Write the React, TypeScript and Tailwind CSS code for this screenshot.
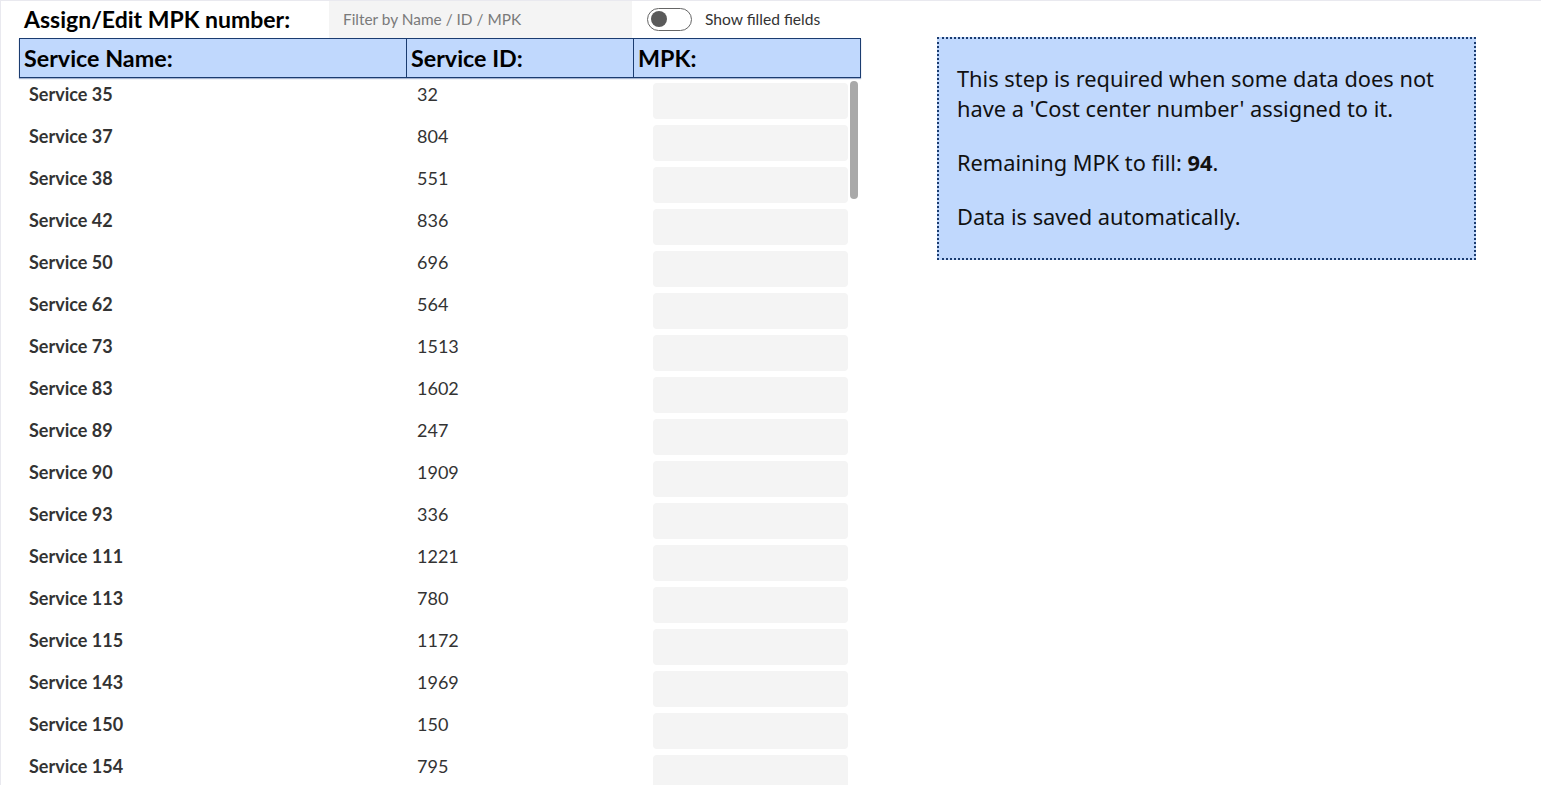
import React from 'react';

const rows: [string, string][] = [
  ['Service 35', '32'],
  ['Service 37', '804'],
  ['Service 38', '551'],
  ['Service 42', '836'],
  ['Service 50', '696'],
  ['Service 62', '564'],
  ['Service 73', '1513'],
  ['Service 83', '1602'],
  ['Service 89', '247'],
  ['Service 90', '1909'],
  ['Service 93', '336'],
  ['Service 111', '1221'],
  ['Service 113', '780'],
  ['Service 115', '1172'],
  ['Service 143', '1969'],
  ['Service 150', '150'],
  ['Service 154', '795'],
];

export default function App() {
  return (
    <div className="h-[785px] w-[1541px] overflow-hidden bg-white border-l border-t border-[#e9e9ef] font-['Lato',sans-serif] text-[#222]">
      <div className="flex items-start">
        {/* left: table */}
        <div className="ml-[18px] w-[842px] flex flex-col">
          <div className="flex items-center h-[37px]">
            <h1 className="ml-[5px] w-[305px] text-[23px] font-bold text-black leading-none">Assign/Edit MPK number:</h1>
            <input
              placeholder="Filter by Name / ID / MPK"
              className="h-[37px] -mt-[1px] w-[303px] bg-[#f4f4f4] pl-[14px] text-[15.4px] text-[#333] placeholder:text-[#7a7a7a] outline-none"
            />
            <div className="ml-[15px] flex items-center">
              <div className="w-[45px] h-[23px] rounded-full border border-[#666] flex items-center px-[3px]">
                <div className="w-[16px] h-[16px] rounded-full bg-[#5a5a5a]" />
              </div>
              <span className="ml-[13px] text-[15.6px] text-[#333]">Show filled fields</span>
            </div>
          </div>
          <div className="grid grid-cols-[387px_227px_1fr] h-[40px] bg-[#c0d8fd] border border-[#1b3c70] shadow-[0_1px_1px_rgba(0,40,120,0.35)] text-[23.3px] font-bold text-black">
            <div className="pl-[4px] flex items-center border-r border-[#1b3c70]">Service Name:</div>
            <div className="pl-[4px] flex items-center border-r border-[#1b3c70]">Service ID:</div>
            <div className="pl-[4px] flex items-center">MPK:</div>
          </div>
          <div className="relative h-[708px] overflow-hidden pt-[2px]">
            {rows.map(([name, id]) => (
              <div key={name} className="grid grid-cols-[387px_227px_1fr] h-[42px]">
                <div className="pl-[10px] pt-[2px] text-[18px] font-bold text-[#333] leading-[24px]">{name}</div>
                <div className="pl-[11px] pt-[2px] text-[18px] text-[#333] leading-[24px]">{id}</div>
                <div className="pl-[20px] pr-[13px] pt-[3px]">
                  <div className="h-[36px] rounded-[4px] bg-[#f4f4f4]" />
                </div>
              </div>
            ))}
            <div className="absolute right-[3px] top-[3px] w-[8px] h-[118px] rounded-full bg-[#a9a9a9]" />
          </div>
        </div>
        {/* right: info box */}
        <div className="ml-[76px] mt-[36px] w-[539px] h-[223px] bg-[#c0d8fd] border-2 border-dotted border-[#1b3c70] px-[18px] pt-[25px] text-[21.8px] leading-[30px] text-[#111] font-['Noto_Sans',sans-serif]">
          <p>This step is required when some data does not have a 'Cost center number' assigned to it.</p>
          <p className="mt-[24px]">Remaining MPK to fill: <b>94</b>.</p>
          <p className="mt-[24px]">Data is saved automatically.</p>
        </div>
      </div>
    </div>
  );
}
